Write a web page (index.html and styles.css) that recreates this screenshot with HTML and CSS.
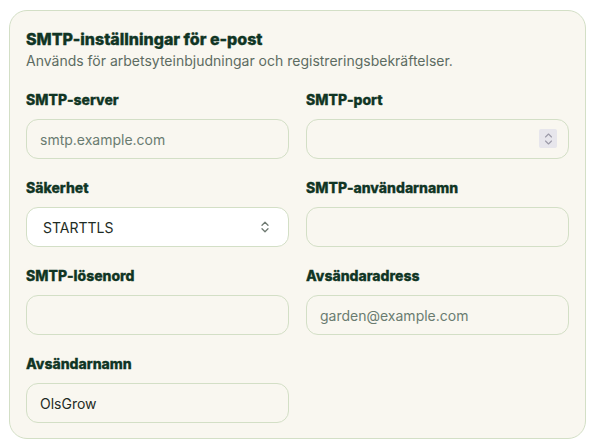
FILE: index.html
```html
<!DOCTYPE html>
<html>
<head>
    <title>SMTP-inställningar</title>
    <link rel="stylesheet" href="styles.css">
</head>
<body>
    <div class="page">
        <section class="card">
            <div class="card-header">
                <h2>SMTP-inställningar för e-post</h2>
                <p>Används för arbetsyteinbjudningar och registreringsbekräftelser.</p>
            </div>

            <div class="form-grid">
                <label class="field">
                    <span class="field-label">SMTP-server</span>
                    <input class="field-input" type="text" placeholder="smtp.example.com">
                </label>
                <label class="field">
                    <span class="field-label">SMTP-port</span>
                    <div class="input-wrap">
                        <input class="field-input field-number" type="number">
                        <span class="spin-box">
                            <svg width="9" height="14" viewBox="0 0 9 14" fill="none" stroke="#9c9aa8" stroke-width="1.1" stroke-linecap="round" stroke-linejoin="round">
                                <path d="M1.5 5 L4.5 2 L7.5 5"/>
                                <path d="M1.5 9 L4.5 12 L7.5 9"/>
                            </svg>
                        </span>
                    </div>
                </label>

                <label class="field">
                    <span class="field-label">Säkerhet</span>
                    <div class="input-wrap">
                        <select class="field-input field-select">
                            <option>STARTTLS</option>
                            <option>SSL/TLS</option>
                            <option>Ingen</option>
                        </select>
                        <svg class="select-icon" width="12" height="14" viewBox="0 0 12 14" fill="none" stroke="#6f7a72" stroke-width="1.3" stroke-linecap="round" stroke-linejoin="round">
                            <path d="M3 5.2 L6 2.2 L9 5.2"/>
                            <path d="M3 8.8 L6 11.8 L9 8.8"/>
                        </svg>
                    </div>
                </label>
                <label class="field">
                    <span class="field-label">SMTP-användarnamn</span>
                    <input class="field-input" type="text">
                </label>

                <label class="field">
                    <span class="field-label">SMTP-lösenord</span>
                    <input class="field-input" type="password">
                </label>
                <label class="field">
                    <span class="field-label">Avsändaradress</span>
                    <input class="field-input" type="email" placeholder="garden@example.com">
                </label>

                <label class="field">
                    <span class="field-label">Avsändarnamn</span>
                    <input class="field-input" type="text" value="OlsGrow">
                </label>
            </div>
        </section>
    </div>
</body>
</html>
```

FILE: styles.css
```css
body {
    margin: 0;
    background-color: #ffffff;
    font-family: Inter, "Noto Sans", sans-serif;
}

.page {
    padding: 10px 17px 0 9px;
}

.card {
    background-color: #f9f7f0;
    border: 1px solid #d3dfc6;
    border-radius: 18px;
    padding: 16px 16px 15px;
}

.card-header h2 {
    margin: 0;
    font-size: 16px;
    line-height: 24px;
    font-weight: 800;
    color: #103524;
    -webkit-text-stroke: 0.35px #103524;
}

.card-header p {
    margin: 0;
    font-size: 14px;
    line-height: 20px;
    color: #5d6c62;
}

.form-grid {
    display: grid;
    grid-template-columns: 1fr 1fr;
    column-gap: 17px;
    row-gap: 19px;
    margin-top: 19px;
}

.field {
    display: flex;
    flex-direction: column;
    gap: 9px;
}

.field-label {
    font-size: 14px;
    line-height: 20px;
    font-weight: 800;
    color: #103524;
    -webkit-text-stroke: 0.3px #103524;
}

.field-input {
    box-sizing: border-box;
    width: 100%;
    height: 40px;
    padding: 0 13px;
    border: 1px solid #d3dfc6;
    border-radius: 12px;
    background-color: transparent;
    font-family: Inter, "Noto Sans", sans-serif;
    font-size: 14px;
    color: #1e2b24;
    outline: none;
}

.field-input::placeholder {
    color: #6a7c70;
}

.input-wrap {
    position: relative;
}

.field-number {
    appearance: textfield;
}

.field-number::-webkit-inner-spin-button,
.field-number::-webkit-outer-spin-button {
    -webkit-appearance: none;
    margin: 0;
}

.spin-box {
    position: absolute;
    right: 12px;
    top: 10px;
    width: 18px;
    height: 19px;
    display: flex;
    align-items: center;
    justify-content: center;
    background-color: #e7e6ec;
    border-radius: 2px;
    pointer-events: none;
}

.field-select {
    appearance: none;
    background-color: #ffffff;
    padding-left: 16px;
}

.select-icon {
    position: absolute;
    right: 18px;
    top: 13px;
    pointer-events: none;
}
```
